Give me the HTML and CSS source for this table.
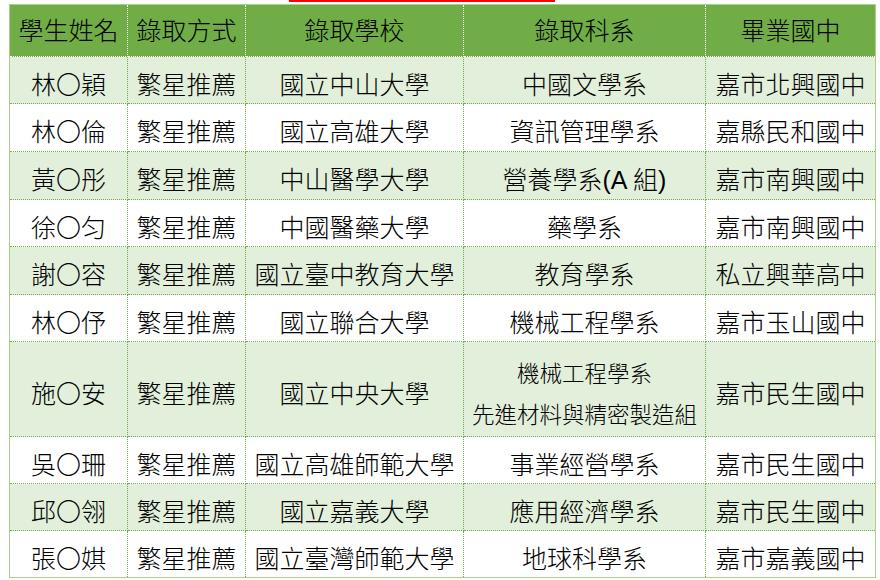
FILE: index.html
```html
<!DOCTYPE html>
<html lang="zh-Hant">
<head>
<meta charset="utf-8">
<link rel="stylesheet" href="styles.css">
</head>
<body>
<div class="redline"></div>
<table class="grid">
  <colgroup>
    <col class="c1"><col class="c2"><col class="c3"><col class="c4"><col class="c5">
  </colgroup>
  <thead>
    <tr class="head">
      <th>學生姓名</th><th>錄取方式</th><th>錄取學校</th><th>錄取科系</th><th>畢業國中</th>
    </tr>
  </thead>
  <tbody>
    <tr class="alt r47"><td>林〇穎</td><td>繁星推薦</td><td>國立中山大學</td><td>中國文學系</td><td>嘉市北興國中</td></tr>
    <tr class="r48"><td>林〇倫</td><td>繁星推薦</td><td>國立高雄大學</td><td>資訊管理學系</td><td>嘉縣民和國中</td></tr>
    <tr class="alt r48"><td>黃〇彤</td><td>繁星推薦</td><td>中山醫學大學</td><td>營養學系(A 組)</td><td>嘉市南興國中</td></tr>
    <tr class="r47"><td>徐〇匀</td><td>繁星推薦</td><td>中國醫藥大學</td><td>藥學系</td><td>嘉市南興國中</td></tr>
    <tr class="alt r48"><td>謝〇容</td><td>繁星推薦</td><td>國立臺中教育大學</td><td>教育學系</td><td>私立興華高中</td></tr>
    <tr class="r47"><td>林〇伃</td><td>繁星推薦</td><td>國立聯合大學</td><td>機械工程學系</td><td>嘉市玉山國中</td></tr>
    <tr class="alt tall"><td>施〇安</td><td>繁星推薦</td><td>國立中央大學</td><td class="two"><div class="line">機械工程學系</div><div class="line">先進材料與精密製造組</div></td><td>嘉市民生國中</td></tr>
    <tr class="r47"><td>吳〇珊</td><td>繁星推薦</td><td>國立高雄師範大學</td><td>事業經營學系</td><td>嘉市民生國中</td></tr>
    <tr class="alt r47"><td>邱〇翎</td><td>繁星推薦</td><td>國立嘉義大學</td><td>應用經濟學系</td><td>嘉市民生國中</td></tr>
    <tr class="r47"><td>張〇娸</td><td>繁星推薦</td><td>國立臺灣師範大學</td><td>地球科學系</td><td>嘉市嘉義國中</td></tr>
  </tbody>
</table>
</body>
</html>
```

FILE: styles.css
```css
html, body {
  margin: 0;
  padding: 0;
  background: #ffffff;
}

body {
  font-family: "Liberation Sans", "Noto Sans CJK TC", sans-serif;
  color: #000;
  width: 880px;
  height: 580px;
  overflow: hidden;
}

.redline {
  margin-left: 289px;
  width: 266px;
  height: 2px;
  background: #ff0000;
  margin-bottom: 2px;
}

.grid {
  margin-left: 9px;
  width: 866px;
  table-layout: fixed;
  border-collapse: collapse;
  border: 1px solid #a9d08e;
}

.c1 { width: 118px; }
.c2 { width: 118px; }
.c3 { width: 218px; }
.c4 { width: 242px; }
.c5 { width: 170px; }

.grid th,
.grid td {
  padding: 0;
  text-align: center;
  font-size: 25px;
  font-weight: 300;
  line-height: 28px;
  white-space: nowrap;
}

.head th {
  background: #70ad47;
  height: 51px;
  border-right: 1px dotted #ffffff;
  border-bottom: 1px dotted #ffffff;
  vertical-align: middle;
}

.grid td {
  padding-top: 9px;
  vertical-align: middle;
  border-right: 1px dotted #70ad47;
  border-bottom: 1px dotted #70ad47;
}

.r47 td { height: 37px; }
.r48 td { height: 38px; }

.alt td {
  background: #e2efda;
}

.tall td {
  height: 85px;
}

.tall td.two {
  padding-top: 12px;
  height: 82px;
}

.two .line {
  font-size: 22.5px;
  line-height: 41px;
}
```
